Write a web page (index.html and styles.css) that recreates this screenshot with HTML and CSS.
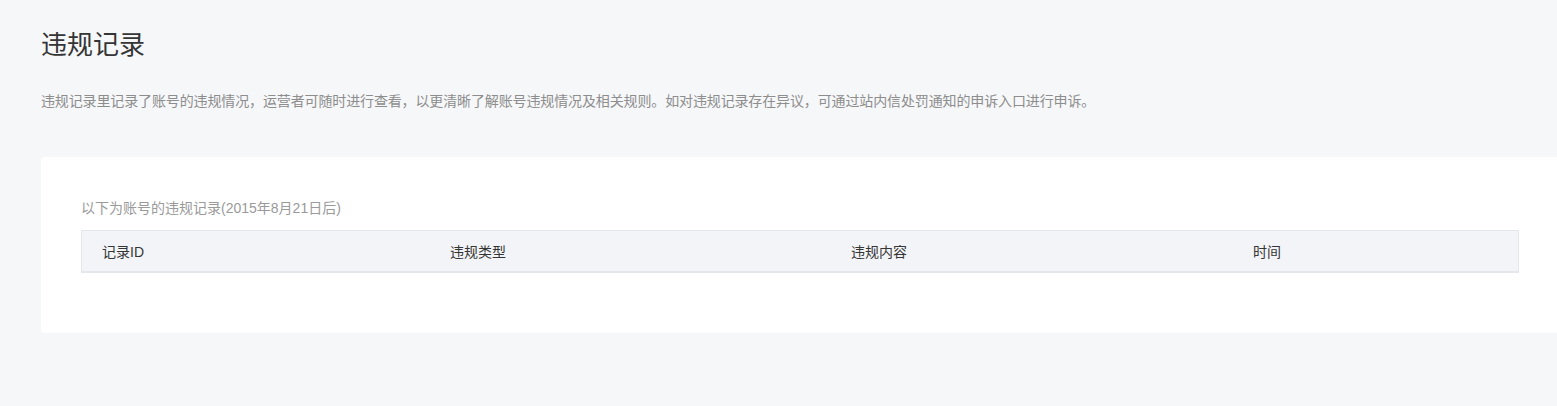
FILE: index.html
```html
<!DOCTYPE html>
<html lang="zh-CN">
<head>
    <meta charset="UTF-8">
    <meta name="viewport" content="width=device-width, initial-scale=1.0">
    <title>违规记录</title>
    <link rel="stylesheet" href="styles.css">
</head>
<body>
    <div id="page">
        <h1 class="page-title">违规记录</h1>
        <p class="page-desc">违规记录里记录了账号的违规情况，运营者可随时进行查看，以更清晰了解账号违规情况及相关规则。如对违规记录存在异议，可通过站内信处罚通知的申诉入口进行申诉。</p>

        <div class="card">
            <p class="card-tip">以下为账号的违规记录(2015年8月21日后)</p>
            <div class="record-table">
                <div class="table-head">
                    <div class="col col-id">记录ID</div>
                    <div class="col col-type">违规类型</div>
                    <div class="col col-content">违规内容</div>
                    <div class="col col-time">时间</div>
                </div>
            </div>
        </div>
    </div>
</body>
</html>
```

FILE: styles.css
```css
html, body {
    margin: 0;
    padding: 0;
    background-color: #f6f7f9;
    overflow: hidden;
}

body {
    font-family: 'Liberation Sans', 'Noto Sans CJK SC', sans-serif;
    color: #333;
}

#page {
    padding-left: 41px;
}

.page-title {
    margin: 27px 0 0;
    font-size: 26px;
    line-height: 36px;
    font-weight: normal;
    color: #353535;
}

.page-desc {
    margin: 28px 0 0;
    font-size: 14px;
    line-height: 20px;
    letter-spacing: -0.13px;
    color: #8d8d8d;
}

.card {
    margin-top: 46px;
    width: 1438px;
    padding: 41px 40px 60px;
    background-color: #fff;
    border-radius: 4px;
}

.card-tip {
    margin: 0 0 12px;
    font-size: 14px;
    line-height: 20px;
    color: #9a9a9a;
}

.record-table {
    border: 1px solid #e4e6eb;
    border-bottom-width: 2px;
    background-color: #f3f4f7;
}

.table-head {
    display: flex;
    height: 40px;
    align-items: center;
    font-size: 14px;
    color: #353535;
}

.col {
    box-sizing: border-box;
    padding-left: 20px;
}

.col-id {
    width: 348px;
}

.col-type {
    width: 401px;
}

.col-content {
    width: 402px;
}

.col-time {
    flex: 1;
}
```
